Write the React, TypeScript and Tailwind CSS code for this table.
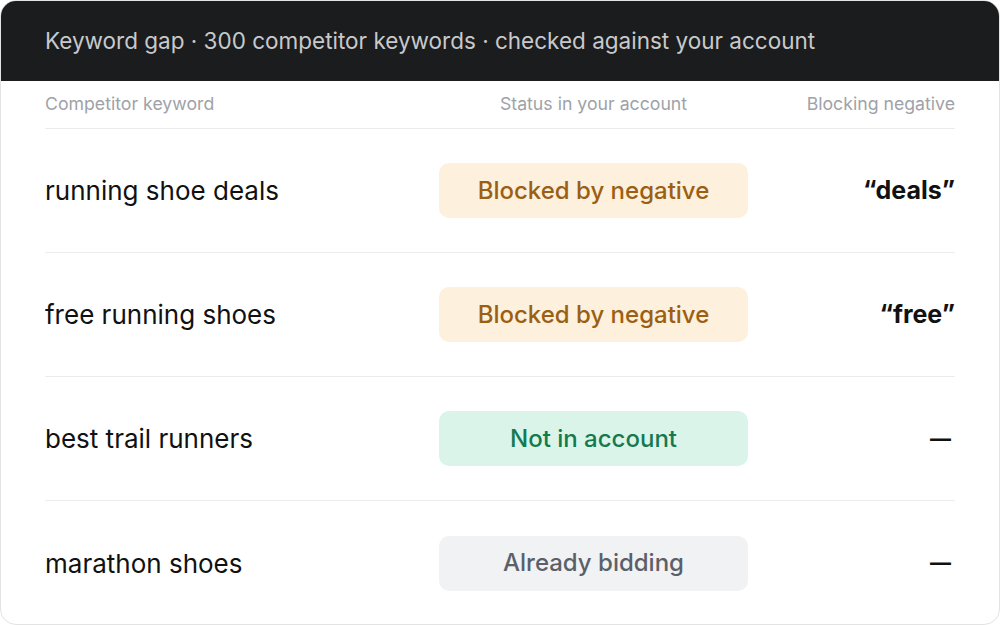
import React from "react";

type Row = { kw: string; status: string; kind: "blocked" | "new" | "bidding"; neg: string };

const rows: Row[] = [
  { kw: "running shoe deals", status: "Blocked by negative", kind: "blocked", neg: "“deals”" },
  { kw: "free running shoes", status: "Blocked by negative", kind: "blocked", neg: "“free”" },
  { kw: "best trail runners", status: "Not in account", kind: "new", neg: "—" },
  { kw: "marathon shoes", status: "Already bidding", kind: "bidding", neg: "—" },
];

function Badge({ kind, children }: { kind: Row["kind"]; children: React.ReactNode }) {
  const cls =
    kind === "blocked"
      ? "bg-[#fdf0dc] text-[#9c5f12]"
      : kind === "new"
      ? "bg-[#dbf4e9] text-[#137a50]"
      : "bg-[#f1f2f3] text-[#5b6068]";
  return (
    <div className={`h-[55px] w-[309px] rounded-[10px] flex items-center justify-center text-[24px] font-medium ${cls}`}>
      {children}
    </div>
  );
}

export default function App() {
  return (
    <div className="w-[1000px] h-[625px] bg-white" style={{ fontFamily: "Inter, 'Liberation Sans', sans-serif" }}>
      <div className="w-full h-full rounded-[16px] border border-[#e3e3e3] overflow-hidden bg-white flex flex-col">
        <div className="h-[80px] shrink-0 bg-[#1b1c1e] flex items-center px-[44px] text-[22.5px] text-[#c8c9cb]">
          Keyword gap · 300 competitor keywords · checked against your account
        </div>
        <div className="px-[44px]">
          <div className="h-[48px] grid grid-cols-[394px_309px_1fr] items-center border-b border-[#ececec] text-[17.7px] text-[#9ea2a8]">
            <div>Competitor keyword</div>
            <div className="text-center">Status in your account</div>
            <div className="text-right">Blocking negative</div>
          </div>
          {rows.map((r, i) => (
            <div
              key={r.kw}
              className={`h-[124px] grid grid-cols-[394px_309px_1fr] items-center ${i < rows.length - 1 ? "border-b border-[#ececec]" : ""}`}
            >
              <div className="text-[26px] text-[#111111]">{r.kw}</div>
              <Badge kind={r.kind}>{r.status}</Badge>
              <div className={`text-right font-bold text-[#111111] ${r.neg === "—" ? "text-[21px] pr-[4px]" : "text-[25px]"}`}>
                {r.neg}
              </div>
            </div>
          ))}
        </div>
      </div>
    </div>
  );
}
